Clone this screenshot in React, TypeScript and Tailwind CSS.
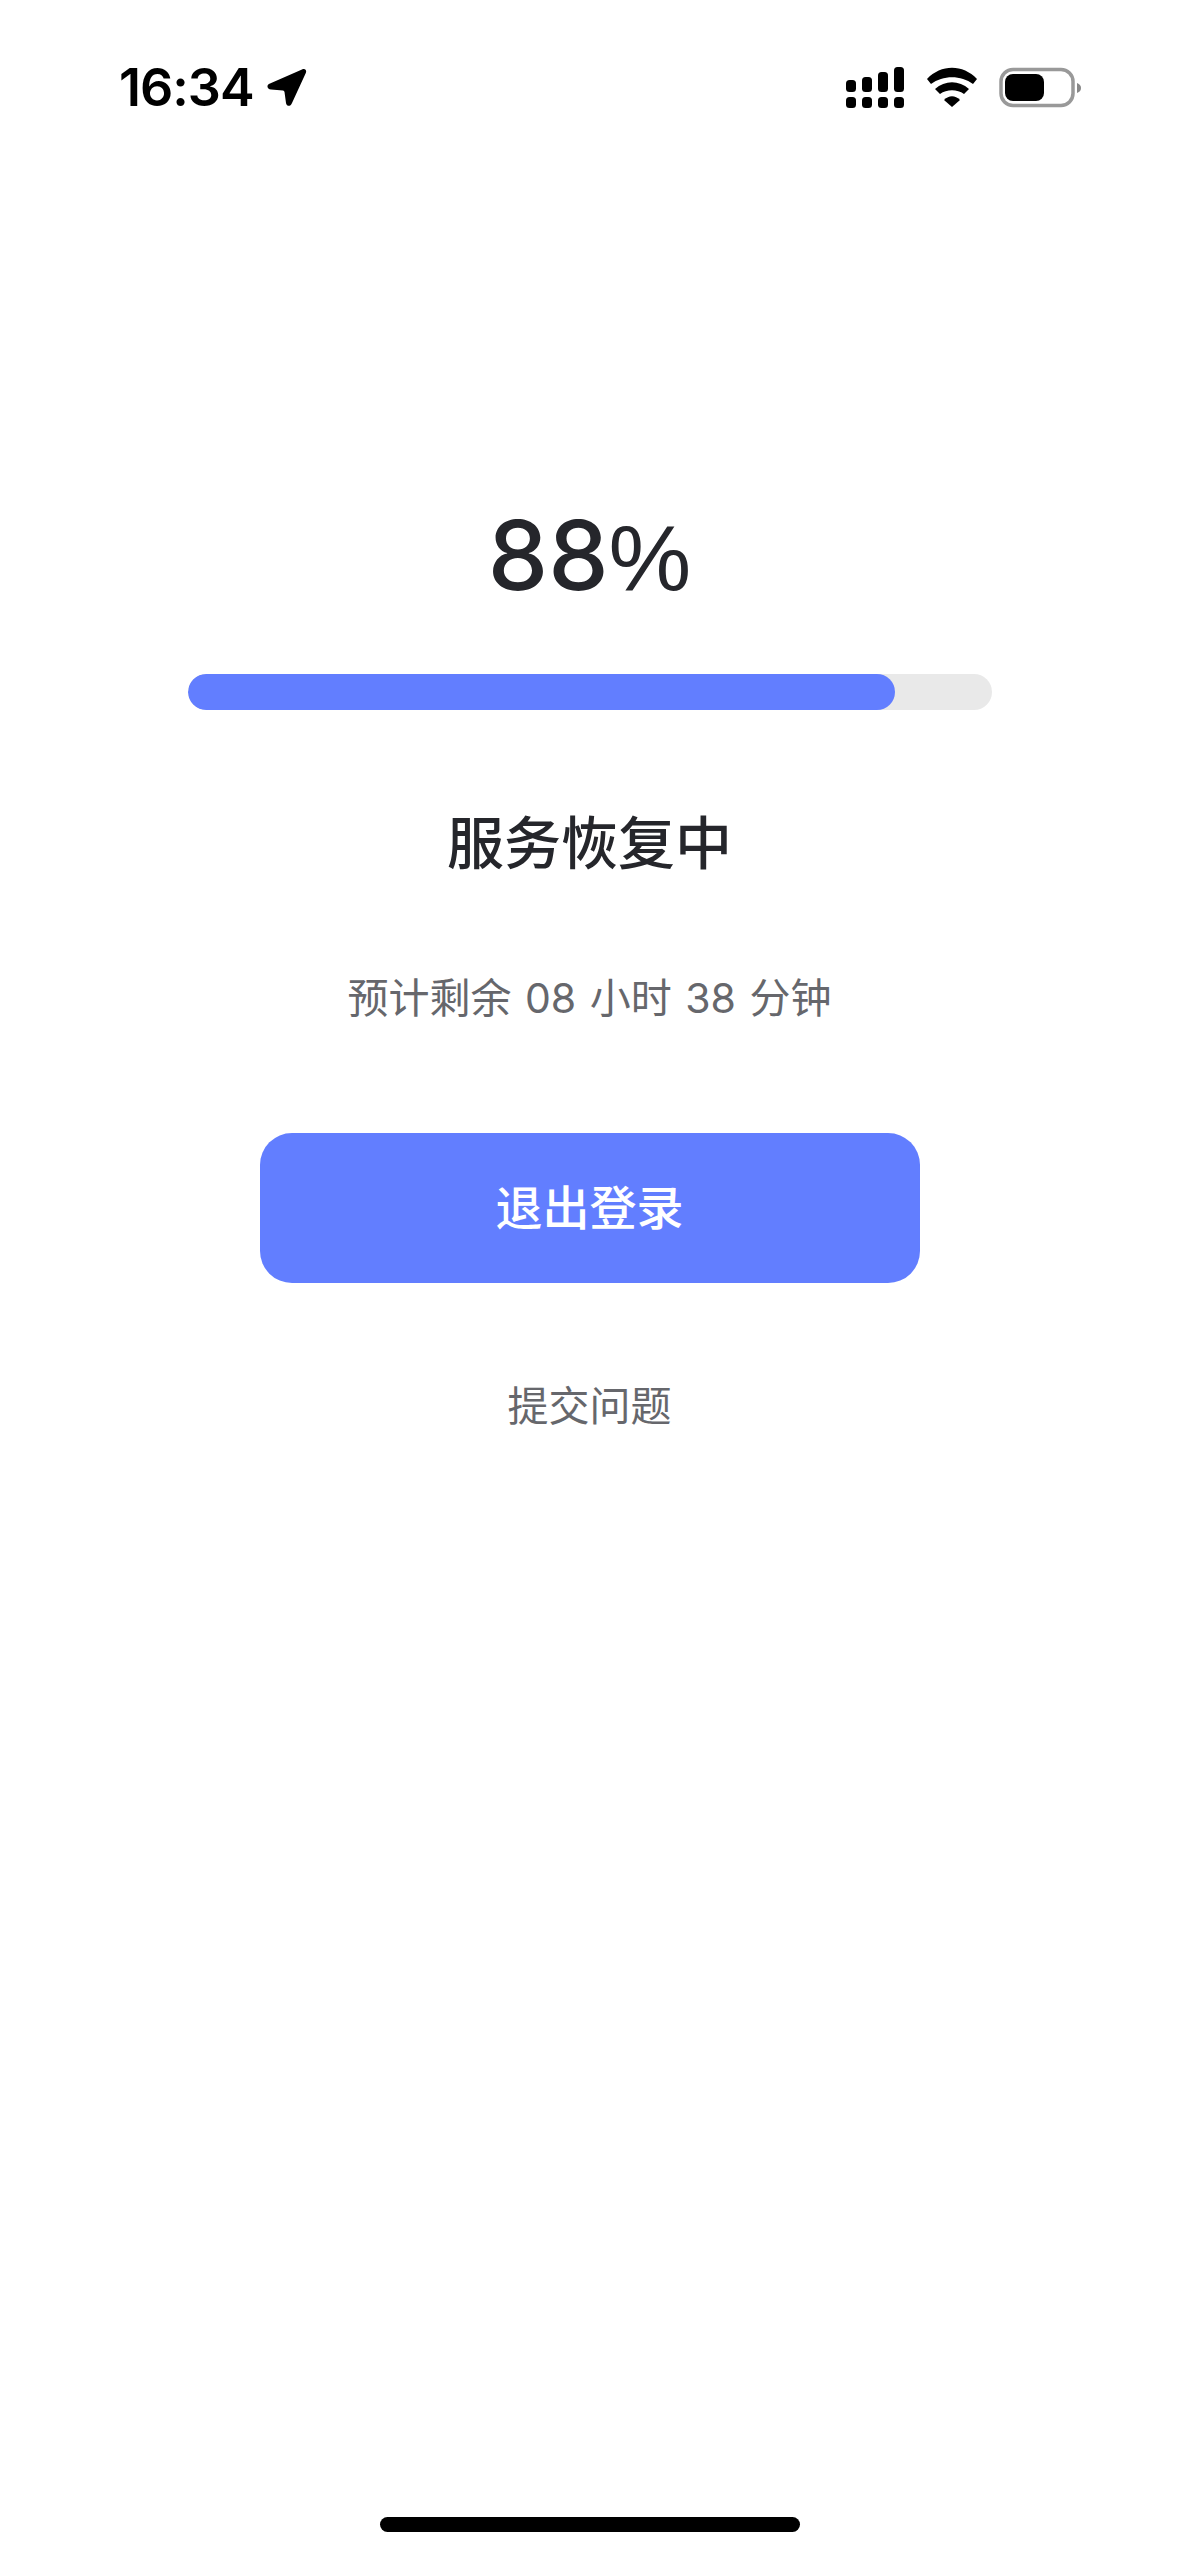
const CJK = "font-['Inter','Noto_Sans_CJK_SC',sans-serif]";

export default function App() {
  return (
    <div className={`w-[1179px] h-[2556px] bg-white flex flex-col items-center relative ${CJK}`}>
      <div className="w-full h-[130px] pt-[57px] pl-[119px] pr-[93px] flex justify-between items-start">
        <div className="flex items-center gap-[13px]">
          <span className="text-[52px] leading-[62px] font-semibold text-black tracking-[-1px]">16:34</span>
          <svg viewBox="0 0 40 40" className="w-[40px] h-[40px]">
            <path d="M35 1.5 C38 0 40 2 38.8 5 L25 35 C23.5 39 19.5 38.5 19 35 L17.5 24 C17.3 23 16.8 22.5 16 22.4 L4 21.5 C0 21 -1 17 3 15.5 Z" fill="#000" />
          </svg>
        </div>
        <svg viewBox="0 0 240 42" className="w-[240px] h-[42px] mt-[10px]">
          <g fill="#000">
            <rect x="0" y="13" width="10" height="12" rx="3.5" />
            <rect x="16" y="10" width="10" height="15" rx="3.5" />
            <rect x="32" y="5" width="10" height="20" rx="3.5" />
            <rect x="48" y="0" width="10" height="25" rx="3.5" />
            <rect x="0" y="30" width="10" height="11" rx="3.5" />
            <rect x="16" y="30" width="10" height="11" rx="3.5" />
            <rect x="32" y="30" width="10" height="11" rx="3.5" />
            <rect x="48" y="30" width="10" height="11" rx="3.5" />
            <path d="M81 12 C95 -3 117 -3 131 12 L127 17 C115 8 97 8 85 17 Z" />
            <path d="M89 22 C99 13 113 13 123 22 L118 27 C111 22 101 22 94 27 Z" />
            <path d="M98 33 C103 28 109 28 114 33 L106 40 Z" />
          </g>
          <rect x="155" y="2.5" width="72" height="36" rx="12" fill="none" stroke="#999" strokeWidth="3.5" />
          <rect x="159" y="7" width="39" height="27" rx="8" fill="#000" />
          <path d="M231 16 C234 17 235 19 235 21 C235 23 234 25 231 26 Z" fill="#888" />
        </svg>
      </div>

      <div className="mt-[367px] text-[96px] leading-[116px] text-[#25262b] font-medium flex justify-center items-baseline">
        <span>88</span>
        <span className="font-['Liberation_Sans',sans-serif] font-normal text-[93px]">%</span>
      </div>

      <div className="mt-[58px] w-[804px] h-[36px] rounded-full bg-[#e9e9e9] overflow-hidden">
        <div className="h-full w-[88%] rounded-full bg-[#627eff]" />
      </div>

      <div className="mt-[94px] text-[57px] leading-[80px] font-medium text-[#25262b]">服务恢复中</div>

      <div className="mt-[84px] text-[41px] leading-[60px] text-[#66676c] [word-spacing:2px]">预计剩余 08 小时 38 分钟</div>

      <button className="mt-[105px] w-[660px] h-[150px] rounded-[32px] bg-[#627eff] text-white text-[47px] font-medium">退出登录</button>

      <div className="mt-[93px] text-[41px] leading-[60px] text-[#66676c]">提交问题</div>

      <div className="absolute bottom-[24px] left-[380px] w-[420px] h-[15px] rounded-full bg-black" />
    </div>
  );
}
